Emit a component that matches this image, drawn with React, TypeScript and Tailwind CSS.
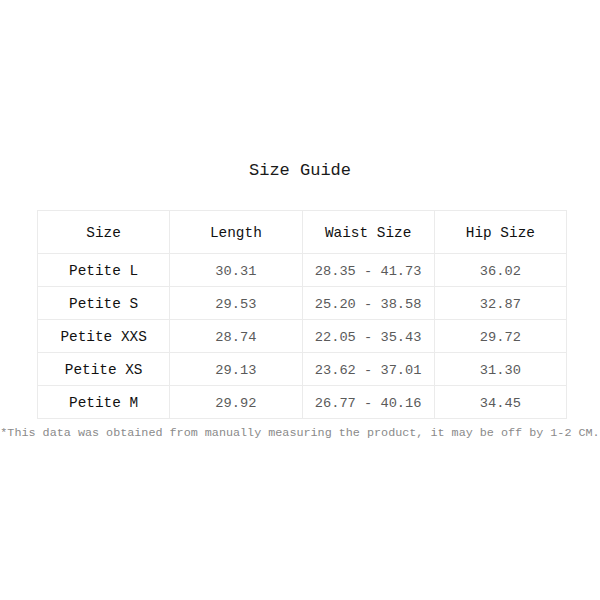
const rows = [
  { size: 'Petite L', length: '30.31', waist: '28.35 - 41.73', hip: '36.02' },
  { size: 'Petite S', length: '29.53', waist: '25.20 - 38.58', hip: '32.87' },
  { size: 'Petite XXS', length: '28.74', waist: '22.05 - 35.43', hip: '29.72' },
  { size: 'Petite XS', length: '29.13', waist: '23.62 - 37.01', hip: '31.30' },
  { size: 'Petite M', length: '29.92', waist: '26.77 - 40.16', hip: '34.45' },
];

const headers = ['Size', 'Length', 'Waist Size', 'Hip Size'];

export default function App() {
  return (
    <div className="w-[600px] h-[600px] bg-white pt-[159px] font-['Liberation_Mono',monospace] overflow-hidden">
      <h1 className="text-center text-[17px] leading-6 text-[#1a1a1a]">Size Guide</h1>

      <table className="mt-[27px] ml-[37px] w-[530px] border-collapse table-fixed">
        <thead>
          <tr className="h-[43px]">
            {headers.map((h) => (
              <th
                key={h}
                className="border border-[#ebebeb] pt-1 text-[14.4px] font-normal text-[#111] text-center w-[132px]"
              >
                {h}
              </th>
            ))}
          </tr>
        </thead>
        <tbody>
          {rows.map((r) => (
            <tr key={r.size} className="h-[33px]">
              <td className="border border-[#ebebeb] pt-1 text-center text-[14.4px] text-[#111]">{r.size}</td>
              <td className="border border-[#ebebeb] pt-1 text-center text-[13.7px] text-[#5a5a5a]">{r.length}</td>
              <td className="border border-[#ebebeb] pt-1 text-center text-[13.7px] text-[#5a5a5a]">{r.waist}</td>
              <td className="border border-[#ebebeb] pt-1 text-center text-[13.7px] text-[#5a5a5a]">{r.hip}</td>
            </tr>
          ))}
        </tbody>
      </table>

      <div className="mt-[6px] flex justify-center">
        <p className="whitespace-nowrap text-[11.75px] leading-4 text-[#8a8a8a]">
          *This data was obtained from manually measuring the product, it may be off by 1-2 CM.
        </p>
      </div>
    </div>
  );
}
